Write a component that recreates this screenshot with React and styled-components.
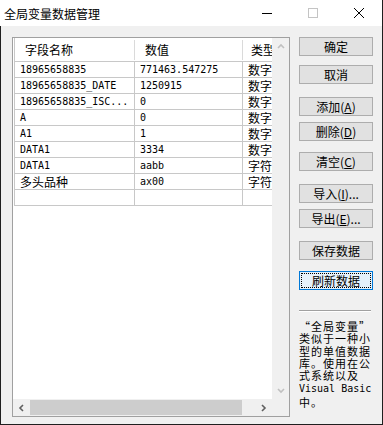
import React from "react";
import styled, { createGlobalStyle } from "styled-components";

const GlobalStyle = createGlobalStyle`
  html, body {
    margin: 0;
    padding: 0;
    background: #1f1f1f;
  }
  body {
    width: 383px;
    height: 425px;
    overflow: hidden;
  }
`;

const CJK = `"Noto Sans CJK SC", "Noto Sans", sans-serif`;
const MONO = `"DejaVu Sans Mono", "Noto Sans CJK SC", monospace`;

const Window = styled.div`
  width: 381px;
  height: 424px;
  margin-left: 1px;
  background: #f0f0f0;
  display: flex;
  flex-direction: column;
  font-family: ${CJK};
  color: #000;
`;

const TitleBar = styled.div`
  height: 26px;
  background: #fff;
  display: flex;
  align-items: center;
  margin-left: -1px;
  padding-left: 4px;

  .title {
    font-size: 12px;
    flex: 1;
  }
`;

const Controls = styled.div`
  display: flex;
  height: 26px;
`;

const CtrlBtn = styled.div`
  width: 46px;
  height: 26px;
  display: flex;
  align-items: center;
  justify-content: center;
`;

const Body = styled.div`
  flex: 1;
  display: flex;
  padding: 11px 0 0 11px;
`;

const ListBox = styled.div`
  width: 278px;
  height: 380px;
  box-sizing: border-box;
  border: 1px solid #a0a0a0;
  background: #fff;
  display: grid;
  grid-template-columns: 1fr 17px;
  grid-template-rows: 1fr 17px;
`;

const Viewport = styled.div`
  overflow: hidden;
  padding-left: 1px;
`;

const Table = styled.div`
  width: 290px;
  border-left: 1px solid #c8c8c8;
`;

const Row = styled.div`
  display: grid;
  grid-template-columns: 120px 108px 62px;
  height: ${(p) => (p.$head ? 24 : 16)}px;
`;

const Cell = styled.div`
  box-sizing: border-box;
  border-bottom: 1px solid #c8c8c8;
  border-right: 1px solid #c8c8c8;
  padding-left: 5px;
  font-family: ${(p) => (p.$cjk ? CJK : MONO)};
  font-size: ${(p) => (p.$cjk ? 12 : 10)}px;
  line-height: 15px;
  white-space: nowrap;
  overflow: hidden;
`;

const HeadCell = styled.div`
  position: relative;
  box-sizing: border-box;
  border-bottom: 1px solid #c8c8c8;
  padding-left: ${(p) => p.$pad}px;
  font-size: 12px;
  line-height: 23px;
  white-space: nowrap;
  overflow: hidden;

  &::after {
    content: "";
    position: absolute;
    right: 0;
    top: 2px;
    bottom: 1px;
    width: 1px;
    background: #dadada;
  }
`;

const VScroll = styled.div`
  background: #f0f0f0;
  display: flex;
  flex-direction: column;
  justify-content: space-between;
`;

const HScroll = styled.div`
  background: #f0f0f0;
  display: flex;
  align-items: stretch;
`;

const Arrow = styled.div`
  width: 17px;
  height: ${(p) => (p.$v ? "17px" : "auto")};
  display: flex;
  align-items: center;
  justify-content: center;
  flex-shrink: 0;
`;

const Track = styled.div`
  flex: 1;
  display: flex;
  align-items: center;
`;

const Thumb = styled.div`
  width: 212px;
  height: 15px;
  background: #cdcdcd;
`;

const Corner = styled.div`
  background: #f0f0f0;
`;

const Side = styled.div`
  width: 74px;
  margin-left: 9px;
  display: flex;
  flex-direction: column;
`;

const Button = styled.div`
  box-sizing: border-box;
  height: 19px;
  margin-top: ${(p) => p.$mt || 0}px;
  border: 1px solid ${(p) => (p.$focus ? "#0078d7" : "#adadad")};
  background: ${(p) => (p.$focus ? "#e5f1fb" : "#e1e1e1")};
  font-size: 12px;
  line-height: 17px;
  text-align: center;
  white-space: nowrap;
  outline: ${(p) => (p.$focus ? "1px dotted #000" : "none")};
  outline-offset: -3px;

  u {
    text-decoration: underline;
    text-underline-offset: 1px;
  }
`;

const Separator = styled.div`
  margin-top: 20px;
  width: 72px;
  height: 1px;
  background: #a0a0a0;
  border-bottom: 1px solid #fff;
`;

const Note = styled.div`
  margin-top: 8px;
  font-size: 11px;
  letter-spacing: 1px;
  line-height: 12.3px;
  white-space: nowrap;

  .mono {
    font-family: ${MONO};
    font-size: 10px;
    letter-spacing: 0;
  }
`;

const Chevron = ({ dir, color }) => {
  const pts = {
    up: "1,5 4,2 7,5",
    down: "1,2 4,5 7,2",
    left: "5,1 2,4 5,7",
    right: "2,1 5,4 2,7",
  }[dir];
  return (
    <svg width="8" height="8" viewBox="0 0 8 8">
      <polyline points={pts} fill="none" stroke={color} strokeWidth="1.6" />
    </svg>
  );
};

const rows = [
  ["18965658835", "771463.547275", "数字"],
  ["18965658835_DATE", "1250915", "数字"],
  ["18965658835_ISC...", "0", "数字"],
  ["A", "0", "数字"],
  ["A1", "1", "数字"],
  ["DATA1", "3334", "数字"],
  ["DATA1", "aabb", "字符"],
  ["多头品种", "ax00", "字符"],
  ["", "", ""],
];

const isCjk = (s) => /[\u4e00-\u9fff]/.test(s);

export default function App() {
  return (
    <>
      <GlobalStyle />
      <Window>
        <TitleBar>
          <span className="title">全局变量数据管理</span>
          <Controls>
            <CtrlBtn>
              <svg width="10" height="10" viewBox="0 0 10 10">
                <line x1="0" y1="5.5" x2="10" y2="5.5" stroke="#000" strokeWidth="1" />
              </svg>
            </CtrlBtn>
            <CtrlBtn>
              <svg width="10" height="10" viewBox="0 0 10 10">
                <rect x="0.5" y="0.5" width="9" height="9" fill="none" stroke="#c4c4c4" strokeWidth="1" />
              </svg>
            </CtrlBtn>
            <CtrlBtn>
              <svg width="10" height="10" viewBox="0 0 10 10">
                <path d="M0 0 L10 10 M10 0 L0 10" stroke="#000" strokeWidth="1" />
              </svg>
            </CtrlBtn>
          </Controls>
        </TitleBar>
        <Body>
          <ListBox>
            <Viewport>
              <Table>
                <Row $head>
                  <HeadCell $pad={10}>字段名称</HeadCell>
                  <HeadCell $pad={10}>数值</HeadCell>
                  <HeadCell $pad={8}>类型</HeadCell>
                </Row>
                {rows.map((r, i) => (
                  <Row key={i}>
                    {r.map((c, j) => (
                      <Cell key={j} $cjk={isCjk(c)}>
                        {c}
                      </Cell>
                    ))}
                  </Row>
                ))}
              </Table>
            </Viewport>
            <VScroll>
              <Arrow $v>
                <Chevron dir="up" color="#c0c0c0" />
              </Arrow>
              <Arrow $v>
                <Chevron dir="down" color="#c0c0c0" />
              </Arrow>
            </VScroll>
            <HScroll>
              <Arrow>
                <Chevron dir="left" color="#606060" />
              </Arrow>
              <Track>
                <Thumb />
              </Track>
              <Arrow>
                <Chevron dir="right" color="#606060" />
              </Arrow>
            </HScroll>
            <Corner />
          </ListBox>
          <Side>
            <Button>确定</Button>
            <Button $mt={9}>取消</Button>
            <Button $mt={13}>
              添加(<u>A</u>)
            </Button>
            <Button $mt={6}>
              删除(<u>D</u>)
            </Button>
            <Button $mt={11}>
              清空(<u>C</u>)
            </Button>
            <Button $mt={13}>
              导入(<u>I</u>)...
            </Button>
            <Button $mt={6}>
              导出(<u>E</u>)...
            </Button>
            <Button $mt={13}>保存数据</Button>
            <Button $mt={11} $focus>
              刷新数据
            </Button>
            <Separator />
            <Note>
              “全局变量”
              <br />
              类似于一种小
              <br />
              型的单值数据
              <br />
              库。使用在公
              <br />
              式系统以及
              <br />
              <span className="mono">Visual Basic</span>
              <br />
              中。
            </Note>
          </Side>
        </Body>
      </Window>
    </>
  );
}
